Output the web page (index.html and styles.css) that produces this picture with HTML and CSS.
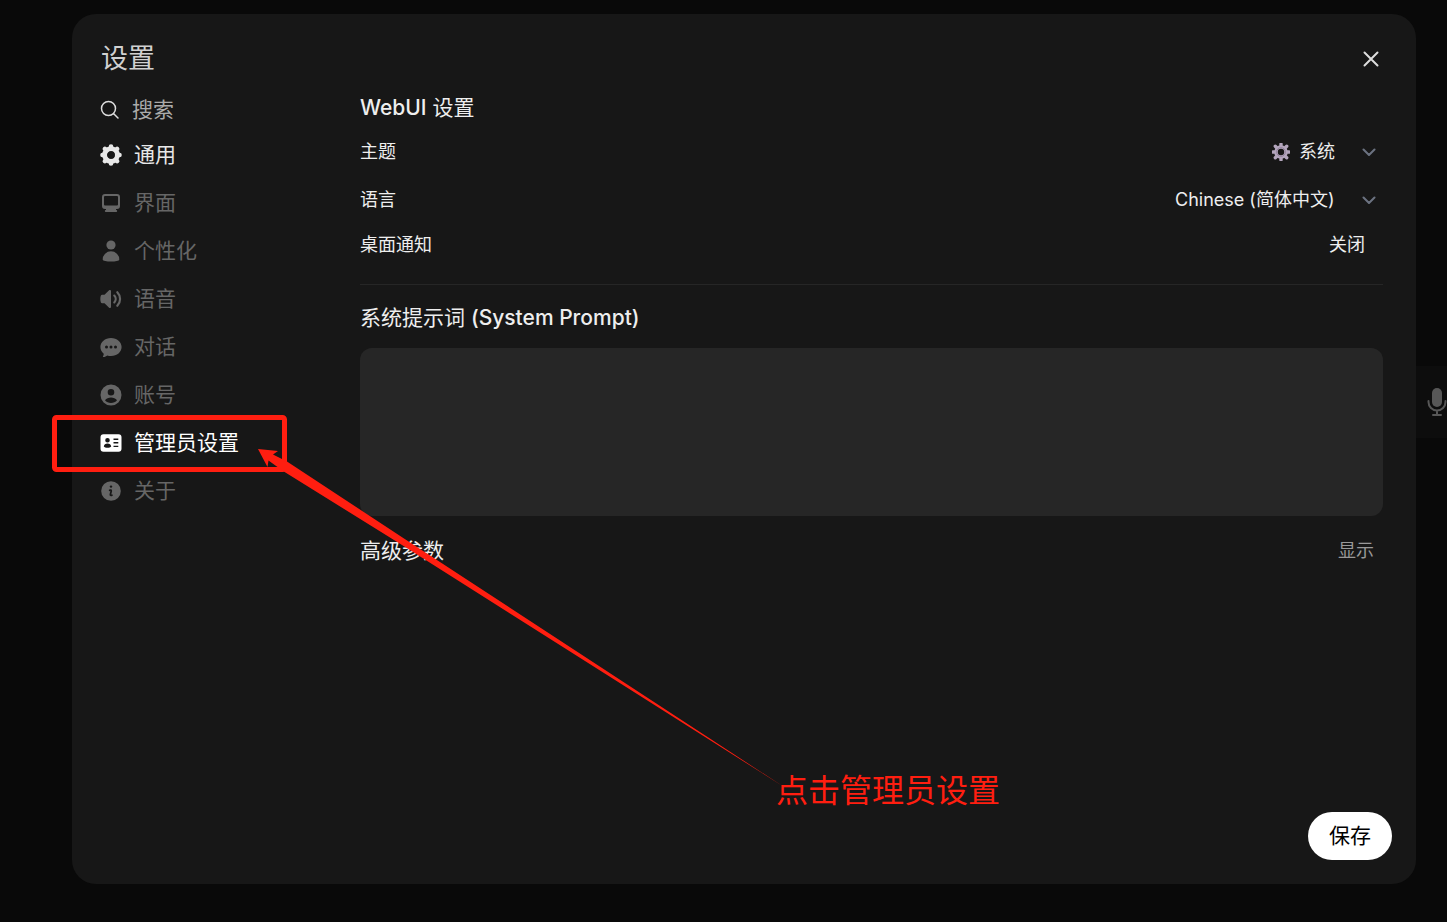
FILE: index.html
```html
<!DOCTYPE html>
<html lang="zh-CN">
<head>
<meta charset="utf-8">
<meta name="viewport" content="width=device-width, initial-scale=1">
<title>设置</title>
<link rel="stylesheet" href="styles.css">
</head>
<body>
<div class="composer">
  <button class="mic" type="button" aria-label="语音输入">
    <svg width="20" height="30" viewBox="0 0 20 30"><rect x="5" y="1" width="10" height="19" rx="5" fill="currentColor"/><path d="M1.500 14v1a8.500 8.500 0 0 0 17 0v-1M10 24v4M6 28h8" fill="none" stroke="currentColor" stroke-width="2" stroke-linecap="round"/></svg>
  </button>
</div>
<main class="modal" role="dialog" aria-labelledby="dialog-title">
  <header class="modal-header">
    <h1 class="modal-title" id="dialog-title">设置</h1>
    <button class="close" type="button" aria-label="关闭窗口">
      <svg width="16" height="16" viewBox="0 0 16 16"><path d="M1.500 1.500l13 13M14.500 1.500l-13 13" stroke="currentColor" stroke-width="2" stroke-linecap="round"/></svg>
    </button>
  </header>
  <div class="modal-body">
    <aside class="sidebar">
      <label class="search">
        <svg width="20" height="20" viewBox="0 0 20 20" fill="none" stroke="currentColor" stroke-width="1.500" stroke-linecap="round"><circle cx="8.500" cy="8.500" r="7"/><path d="M13.700 13.700l4.300 4.300"/></svg>
        <input class="search-input" type="text" placeholder="搜索" aria-label="搜索">
      </label>
      <nav class="tabs">
        <button class="tab tab-active" type="button">
          <svg class="icon" viewBox="0 0 22 22"><g stroke="currentColor" stroke-width="4.600" stroke-linecap="round"><path d="M11 2.500v2M11 17.500v2M2.500 11h2M17.500 11h2M4.900 4.900l1.500 1.500M15.600 15.600l1.500 1.500M17.100 4.900l-1.500 1.500M6.400 15.600l-1.500 1.500"/></g><circle cx="11" cy="11" r="6.400" fill="none" stroke="currentColor" stroke-width="4.800"/></svg>
          通用
        </button>
        <button class="tab" type="button">
          <svg class="icon" viewBox="0 0 22 22"><path fill="currentColor" fill-rule="evenodd" d="M5 2h12a3 3 0 0 1 3 3v9a3 3 0 0 1-3 3h-1v1h.2a1 1 0 0 1 0 2H5.800a1 1 0 0 1 0-2H6v-1H5a3 3 0 0 1-3-3V5a3 3 0 0 1 3-3zm0 2a1 1 0 0 0-1 1v7.500a1 1 0 0 0 1 1h12a1 1 0 0 0 1-1V5a1 1 0 0 0-1-1z"/></svg>
          界面
        </button>
        <button class="tab" type="button">
          <svg class="icon" viewBox="0 0 22 22" fill="currentColor"><circle cx="11" cy="5" r="4.600"/><path d="M2.700 19.500a8.300 8.300 0 0 1 16.600 0c0 2.800-16.600 2.800-16.600 0z"/></svg>
          个性化
        </button>
        <button class="tab" type="button">
          <svg class="icon" viewBox="0 0 22 22"><path fill="currentColor" d="M11 3.100v15.800c0 1-1.200 1.500-1.900.8L4.500 15.200H2.200c-.7 0-1.200-.4-1.400-1a11 11 0 0 1 0-6.400c.2-.6.7-1 1.400-1h2.300l4.600-4.500c.7-.7 1.900-.2 1.900.8z"/><path d="M14.300 7.600a4.900 4.900 0 0 1 0 6.800M17.300 4.200a9.700 9.700 0 0 1 0 13.600" fill="none" stroke="currentColor" stroke-width="2.200" stroke-linecap="round"/></svg>
          语音
        </button>
        <button class="tab" type="button">
          <svg class="icon" viewBox="0 0 22 22"><path fill="currentColor" fill-rule="evenodd" d="M11 2c6 0 10.600 4 10.600 9S17 20 11 20c-1.300 0-2.600-.2-3.700-.6-1 .9-2.400 1.500-3.800 1.500-.5 0-.8-.6-.4-1 .5-.6.7-1.400.6-2.200C1.700 16 .4 13.700.4 11 .4 6 5 2 11 2zM6.500 9.500a1.500 1.500 0 1 0 0 3 1.500 1.500 0 0 0 0-3zm4.500 0a1.500 1.500 0 1 0 0 3 1.500 1.500 0 0 0 0-3zm4.500 0a1.500 1.500 0 1 0 0 3 1.500 1.500 0 0 0 0-3z"/></svg>
          对话
        </button>
        <button class="tab" type="button">
          <svg class="icon" viewBox="0 0 22 22"><path fill="currentColor" fill-rule="evenodd" d="M11 .5a10.500 10.500 0 1 0 0 21 10.500 10.500 0 0 0 0-21zm0 4.500a3.300 3.300 0 1 0 0 6.600A3.300 3.300 0 0 0 11 5zm-6 11.200c2.600-3.600 9.400-3.600 12 0-2.600 3.700-9.400 3.700-12 0z"/></svg>
          账号
        </button>
        <button class="tab tab-current" type="button">
          <svg class="icon" viewBox="0 0 22 22"><path fill="currentColor" fill-rule="evenodd" d="M3.500 2.300h15a3 3 0 0 1 3 3v11.400a3 3 0 0 1-3 3h-15a3 3 0 0 1-3-3V5.300a3 3 0 0 1 3-3zM7.500 6a2.300 2.300 0 1 0 0 4.600 2.300 2.300 0 0 0 0-4.600zm0 5.600c-2 0-3.500 1.100-3.700 2.900 1.200 1.800 6.200 1.800 7.400 0-.2-1.800-1.700-2.900-3.700-2.900zM13.500 6.500v1.400h4.800V6.500zm0 3.600v1.400h4.800v-1.400zm0 3.600v1.400h4.800v-1.400z"/></svg>
          管理员设置
        </button>
        <button class="tab" type="button">
          <svg class="icon" viewBox="0 0 22 22"><circle cx="11" cy="11" r="9.800" fill="currentColor"/><circle cx="11" cy="6.600" r="1.200" fill="#171717"/><path d="M9.700 10.300c.8-.5 1.700-.1 1.500.8l-.8 3.300c-.2.900.6 1.300 1.500.8" fill="none" stroke="#171717" stroke-width="1.800" stroke-linecap="round"/></svg>
          关于
        </button>
      </nav>
    </aside>
    <section class="content">
      <h2 class="heading"><span class="latin">WebUI</span> 设置</h2>
      <div class="row">
        <label for="theme">主题</label>
        <div class="picker">
          <svg class="gear" viewBox="0 0 18 18"><path d="M9 1v16M1 9h16M3.300 3.300l11.400 11.400M14.700 3.300L3.300 14.700" stroke="#b3a5bc" stroke-width="3.400" stroke-linecap="round"/><circle cx="9" cy="9" r="5" fill="#171717" stroke="#b3a5bc" stroke-width="3.600"/><circle cx="9" cy="9" r="4.400" fill="none" stroke="#8b7b96" stroke-width=".8"/></svg>
          <div class="select-box">
            <select class="select" id="theme"><option>系统</option></select>
            <svg class="chevron" viewBox="0 0 14 8"><path d="M1.500 1.500L7 7l5.500-5.500"/></svg>
          </div>
        </div>
      </div>
      <div class="row">
        <label for="language">语言</label>
        <div class="select-box">
          <select class="select" id="language"><option>Chinese (简体中文)</option></select>
          <svg class="chevron" viewBox="0 0 14 8"><path d="M1.500 1.500L7 7l5.500-5.500"/></svg>
        </div>
      </div>
      <div class="row row-short">
        <label for="notify">桌面通知</label>
        <button class="toggle" id="notify" type="button">关闭</button>
      </div>
      <hr class="divider">
      <label class="heading" for="prompt">系统提示词 <span class="latin">(System Prompt)</span></label>
      <textarea class="prompt" id="prompt"></textarea>
      <div class="advanced">
        <h2 class="heading">高级参数</h2>
        <button class="show" type="button">显示</button>
      </div>
    </section>
  </div>
  <footer class="modal-footer"><button class="save" type="button">保存</button></footer>
</main>
<div class="markup">
  <svg class="markup-drawing" width="800" height="800" viewBox="0 0 800 800" fill="#ff1e10"><rect x="54.500" y="417.500" width="230" height="52" rx="2" fill="none" stroke="#ff1e10" stroke-width="5"/><path d="M258 449L278 451L273 454.500L287 461.500L404 538.500L784 787L402 545L283 471L268.500 460.500L267.500 467Z"/></svg>
  <p class="markup-text">点击管理员设置</p>
</div>
</body>
</html>
```
FILE: styles.css
```css
* { box-sizing: border-box; }

body {
  margin: 0;
  min-height: 100vh;
  display: flex;
  position: relative;
  overflow-x: hidden;
  padding: 14px 31px 38px 72px;
  background: #090909;
  color: #eee;
  font-family: Inter, "Noto Sans CJK SC", sans-serif;
  font-size: 18px;
  line-height: 28px;
}

h1, h2, p { margin: 0; }

button, input, select, textarea {
  font: inherit;
  color: inherit;
  background: none;
  border: 0;
  padding: 0;
}

button { cursor: pointer; }

svg { display: block; flex: none; }

.composer {
  position: absolute;
  right: 0;
  top: 366px;
  width: 100px;
  height: 72px;
  display: flex;
  align-items: center;
  justify-content: flex-end;
  background: #0d0d0d;
}

.mic { color: #575757; }

.modal {
  position: relative;
  flex: 1;
  min-width: 0;
  display: flex;
  flex-direction: column;
  padding: 30px 24px 24px 28px;
  border-radius: 24px;
  background: #171717;
}

.modal-header {
  display: flex;
  align-items: center;
  justify-content: space-between;
  height: 30px;
  padding: 0 13px 0 1px;
}

.modal-title {
  font-size: 27px;
  line-height: 32px;
  font-weight: 400;
  color: #d0d0d0;
}

.close { color: #ddd; }

.modal-body {
  display: flex;
  padding: 20px 9px 0 0;
}

.sidebar {
  flex: none;
  width: 260px;
  font-size: 21px;
}

.search {
  display: flex;
  align-items: center;
  gap: 12px;
  height: 32px;
  margin-bottom: 5px;
  color: #ddd;
}

.search-input {
  min-width: 0;
  width: 100%;
  outline: none;
}

.search-input::placeholder { color: #aaa; opacity: 1; }

.tabs { display: flex; flex-direction: column; }

.tab {
  display: flex;
  align-items: center;
  gap: 12px;
  height: 48px;
  color: #666;
}

.icon { width: 22px; height: 22px; }

.tab-active { color: #e8e8e8; }
.tab-current { color: #fff; }

.content {
  flex: 1;
  min-width: 0;
  display: flex;
  flex-direction: column;
}

.heading {
  font-size: 21px;
  font-weight: 400;
  line-height: 28px;
}

.latin { font-weight: 500; }

.row {
  display: flex;
  align-items: center;
  justify-content: space-between;
  height: 48px;
}

.content > h2 { margin-bottom: 6px; }

.row-short { height: 42px; }

.picker { display: flex; align-items: center; gap: 9px; }

.gear { width: 18px; height: 18px; }

.select-box { display: grid; align-items: center; }

.select {
  grid-area: 1 / 1;
  appearance: none;
  padding-right: 48px;
}

.select option { background: #171717; }

.chevron {
  grid-area: 1 / 1;
  justify-self: end;
  width: 14px;
  height: 8px;
  margin-right: 7px;
  fill: none;
  stroke: #6b7280;
  stroke-width: 2;
  stroke-linecap: round;
  stroke-linejoin: round;
  pointer-events: none;
}

.toggle { padding-right: 18px; }

.divider {
  width: 100%;
  margin: 18px 0 19px;
  border: 0;
  border-top: 1px solid #262626;
}

.prompt {
  width: 100%;
  height: 168px;
  margin-top: 16px;
  padding: 12px 16px;
  border-radius: 12px;
  background: #262626;
  resize: none;
}

.advanced {
  display: flex;
  align-items: center;
  justify-content: space-between;
  margin-top: 21px;
  padding-right: 9px;
}

.show { color: #999; }

.modal-footer {
  display: flex;
  justify-content: flex-end;
  margin-top: auto;
}

.save {
  height: 48px;
  padding: 0 21px;
  border-radius: 24px;
  background: #fff;
  color: #000;
  font-size: 21px;
}

.markup {
  position: absolute;
  top: 0;
  left: 0;
  pointer-events: none;
}

.markup-text {
  position: absolute;
  left: 776px;
  top: 771px;
  font-size: 32px;
  line-height: 40px;
  white-space: nowrap;
  color: #ff1e10;
}
```
